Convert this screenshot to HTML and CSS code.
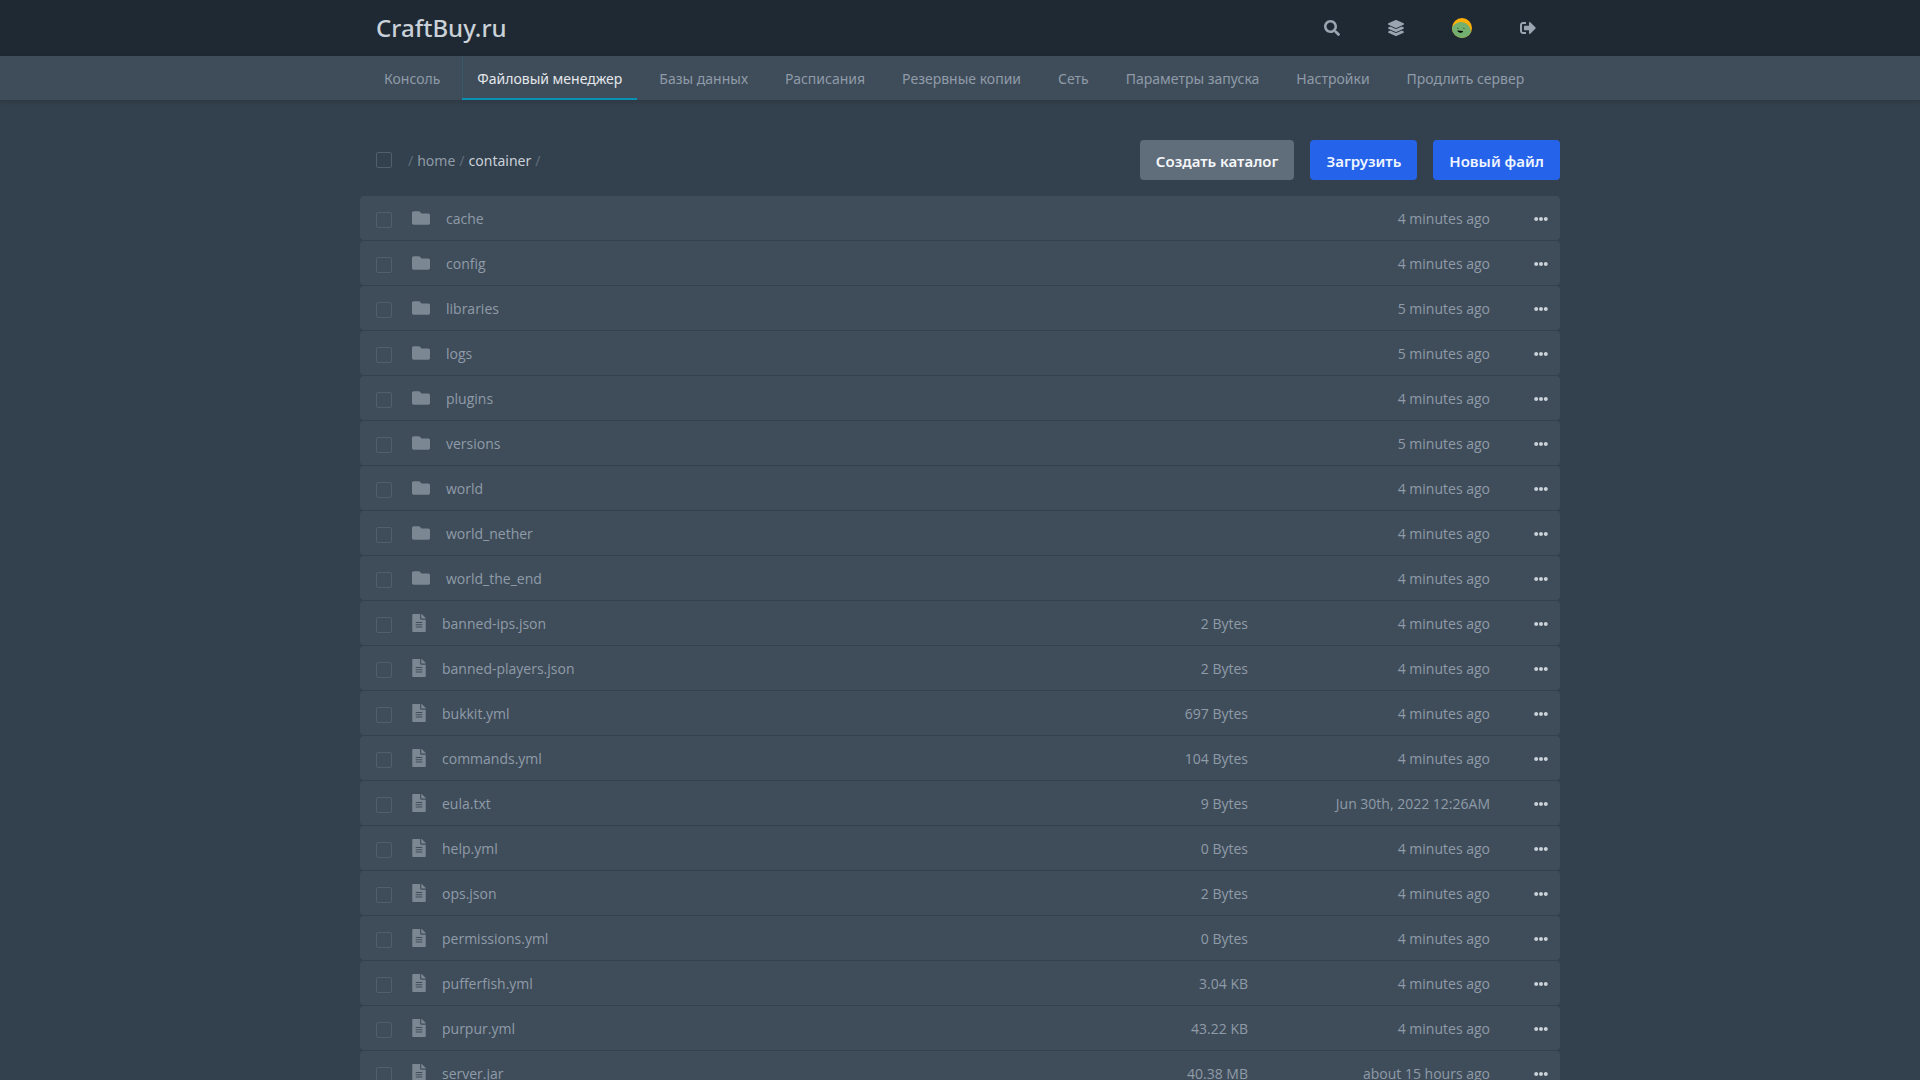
FILE: index.html
```html
<!DOCTYPE html>
<html lang="ru">
<head>
    <meta charset="UTF-8">
    <meta name="viewport" content="width=device-width, initial-scale=1.0">
    <title>CraftBuy.ru</title>
    <link rel="stylesheet" href="styles.css">
</head>
<body>
    <svg class="sprite" aria-hidden="true">
        <symbol id="search" viewBox="0 0 512 512"><path d="M505 442.7L405.3 343c-4.5-4.5-10.6-7-17-7H372c27.6-35.3 44-79.7 44-128C416 93.1 322.9 0 208 0S0 93.1 0 208s93.1 208 208 208c48.3 0 92.7-16.4 128-44v16.3c0 6.4 2.5 12.5 7 17l99.7 99.7c9.4 9.4 24.6 9.4 33.9 0l28.3-28.3c9.4-9.4 9.4-24.6.1-34zM208 336c-70.7 0-128-57.2-128-128 0-70.7 57.2-128 128-128 70.7 0 128 57.2 128 128 0 70.7-57.2 128-128 128z"/></symbol>
        <symbol id="layers" viewBox="0 0 512 512"><path d="M12.41 148.02l232.94 105.67c6.8 3.09 14.49 3.09 21.29 0l232.94-105.67c16.55-7.51 16.55-32.52 0-40.03L266.65 2.31a25.607 25.607 0 0 0-21.29 0L12.41 107.98c-16.55 7.51-16.55 32.53 0 40.04zm487.18 88.28l-58.09-26.33-161.64 73.27c-7.56 3.43-15.59 5.17-23.86 5.17s-16.29-1.74-23.86-5.17L70.51 209.97l-58.1 26.33c-16.55 7.5-16.55 32.5 0 40l232.94 105.59c6.8 3.08 14.49 3.08 21.29 0L499.59 276.3c16.55-7.5 16.55-32.5 0-40zm0 127.8l-57.87-26.23-161.86 73.37c-7.56 3.43-15.59 5.17-23.86 5.17s-16.29-1.74-23.86-5.17L70.29 337.87 12.41 364.1c-16.55 7.5-16.55 32.5 0 40l232.94 105.59c6.8 3.08 14.49 3.08 21.29 0L499.59 404.1c16.55-7.5 16.55-32.5 0-40z"/></symbol>
        <symbol id="sign-out" viewBox="0 0 512 512"><path d="M497 273L329 441c-15 15-41 4.5-41-17v-96H152c-13.3 0-24-10.7-24-24v-96c0-13.3 10.7-24 24-24h136V88c0-21.4 25.9-32 41-17l168 168c9.3 9.4 9.3 24.6 0 34zM192 436v-40c0-6.6-5.4-12-12-12H96c-17.7 0-32-14.3-32-32V160c0-17.7 14.3-32 32-32h84c6.6 0 12-5.4 12-12V76c0-6.6-5.4-12-12-12H96c-53 0-96 43-96 96v192c0 53 43 96 96 96h84c6.6 0 12-5.4 12-12z"/></symbol>
        <symbol id="folder" viewBox="0 0 512 512"><path d="M464 128H272l-64-64H48C21.49 64 0 85.49 0 112v288c0 26.51 21.49 48 48 48h416c26.51 0 48-21.49 48-48V176c0-26.51-21.49-48-48-48z"/></symbol>
        <symbol id="file" viewBox="0 0 384 512"><path d="M224 136V0H24C10.7 0 0 10.7 0 24v464c0 13.3 10.7 24 24 24h336c13.3 0 24-10.7 24-24V160H248c-13.2 0-24-10.8-24-24zm64 236c0 6.6-5.4 12-12 12H108c-6.6 0-12-5.4-12-12v-8c0-6.6 5.4-12 12-12h168c6.6 0 12 5.4 12 12v8zm0-64c0 6.6-5.4 12-12 12H108c-6.6 0-12-5.4-12-12v-8c0-6.6 5.4-12 12-12h168c6.6 0 12 5.4 12 12v8zm0-72v8c0 6.6-5.4 12-12 12H108c-6.6 0-12-5.4-12-12v-8c0-6.6 5.4-12 12-12h168c6.6 0 12 5.4 12 12zm96-114.1v6.1H256V0h6.1c6.4 0 12.5 2.5 17 7l97.9 98c4.5 4.5 7 10.6 7 16.9z"/></symbol>
        <symbol id="dots" viewBox="0 0 512 512"><path d="M328 256c0 39.8-32.2 72-72 72s-72-32.2-72-72 32.2-72 72-72 72 32.2 72 72zm104-72c-39.8 0-72 32.2-72 72s32.2 72 72 72 72-32.2 72-72-32.2-72-72-72zm-352 0c-39.8 0-72 32.2-72 72s32.2 72 72 72 72-32.2 72-72-32.2-72-72-72z"/></symbol>
    </svg>

    <header class="header">
        <div class="header-inner">
            <a class="logo" href="#">CraftBuy.ru</a>
            <div class="header-links">
                <button class="header-link" aria-label="Поиск"><svg class="icon"><use href="#search"/></svg></button>
                <a class="header-link" href="#" aria-label="Серверы"><svg class="icon"><use href="#layers"/></svg></a>
                <a class="header-link" href="#" aria-label="Аккаунт">
                    <svg class="avatar" viewBox="0 0 20 20">
                        <clipPath id="avatar-clip"><circle cx="10" cy="10" r="10"/></clipPath>
                        <g clip-path="url(#avatar-clip)">
                            <rect width="20" height="20" fill="#ffad08"/>
                            <circle cx="9" cy="14" r="10" fill="#73b06f"/>
                            <path d="M5 10.500q.8-.9 1.600 0M11 10.500q.8-.9 1.600 0" fill="none" stroke="#26402a" stroke-width=".7"/>
                            <path d="M5.200 12.500l6 .4q-.6 2-3 1.900-2.400-.2-3-2.300z" fill="#000"/>
                        </g>
                    </svg>
                </a>
                <button class="header-link" aria-label="Выйти"><svg class="icon"><use href="#sign-out"/></svg></button>
            </div>
        </div>
    </header>

    <nav class="subnav">
        <div class="subnav-inner">
            <a href="#">Консоль</a>
            <a href="#" class="active">Файловый менеджер</a>
            <a href="#">Базы данных</a>
            <a href="#">Расписания</a>
            <a href="#">Резервные копии</a>
            <a href="#">Сеть</a>
            <a href="#">Параметры запуска</a>
            <a href="#">Настройки</a>
            <a href="#">Продлить сервер</a>
        </div>
    </nav>

    <main class="content">
        <div class="toolbar">
            <input type="checkbox" class="checkbox" aria-label="Выбрать все">
            <div class="breadcrumbs">
                <span>/</span>
                <span class="crumb">home</span>
                <span>/</span>
                <a class="crumb current" href="#">container</a>
                <span>/</span>
            </div>
            <div class="actions">
                <button class="btn btn-secondary">Создать каталог</button>
                <button class="btn">Загрузить</button>
                <button class="btn">Новый файл</button>
            </div>
        </div>

        <table class="files">
            <tbody>
                <tr>
                    <td class="check"><input type="checkbox" class="checkbox" aria-label="cache"></td>
                    <td><a class="name" href="#"><svg class="folder-icon"><use href="#folder"/></svg>cache</a></td>
                    <td class="size"></td>
                    <td class="date">4 minutes ago</td>
                    <td class="menu"><button aria-label="Действия"><svg><use href="#dots"/></svg></button></td>
                </tr>
                <tr>
                    <td class="check"><input type="checkbox" class="checkbox" aria-label="config"></td>
                    <td><a class="name" href="#"><svg class="folder-icon"><use href="#folder"/></svg>config</a></td>
                    <td class="size"></td>
                    <td class="date">4 minutes ago</td>
                    <td class="menu"><button aria-label="Действия"><svg><use href="#dots"/></svg></button></td>
                </tr>
                <tr>
                    <td class="check"><input type="checkbox" class="checkbox" aria-label="libraries"></td>
                    <td><a class="name" href="#"><svg class="folder-icon"><use href="#folder"/></svg>libraries</a></td>
                    <td class="size"></td>
                    <td class="date">5 minutes ago</td>
                    <td class="menu"><button aria-label="Действия"><svg><use href="#dots"/></svg></button></td>
                </tr>
                <tr>
                    <td class="check"><input type="checkbox" class="checkbox" aria-label="logs"></td>
                    <td><a class="name" href="#"><svg class="folder-icon"><use href="#folder"/></svg>logs</a></td>
                    <td class="size"></td>
                    <td class="date">5 minutes ago</td>
                    <td class="menu"><button aria-label="Действия"><svg><use href="#dots"/></svg></button></td>
                </tr>
                <tr>
                    <td class="check"><input type="checkbox" class="checkbox" aria-label="plugins"></td>
                    <td><a class="name" href="#"><svg class="folder-icon"><use href="#folder"/></svg>plugins</a></td>
                    <td class="size"></td>
                    <td class="date">4 minutes ago</td>
                    <td class="menu"><button aria-label="Действия"><svg><use href="#dots"/></svg></button></td>
                </tr>
                <tr>
                    <td class="check"><input type="checkbox" class="checkbox" aria-label="versions"></td>
                    <td><a class="name" href="#"><svg class="folder-icon"><use href="#folder"/></svg>versions</a></td>
                    <td class="size"></td>
                    <td class="date">5 minutes ago</td>
                    <td class="menu"><button aria-label="Действия"><svg><use href="#dots"/></svg></button></td>
                </tr>
                <tr>
                    <td class="check"><input type="checkbox" class="checkbox" aria-label="world"></td>
                    <td><a class="name" href="#"><svg class="folder-icon"><use href="#folder"/></svg>world</a></td>
                    <td class="size"></td>
                    <td class="date">4 minutes ago</td>
                    <td class="menu"><button aria-label="Действия"><svg><use href="#dots"/></svg></button></td>
                </tr>
                <tr>
                    <td class="check"><input type="checkbox" class="checkbox" aria-label="world_nether"></td>
                    <td><a class="name" href="#"><svg class="folder-icon"><use href="#folder"/></svg>world_nether</a></td>
                    <td class="size"></td>
                    <td class="date">4 minutes ago</td>
                    <td class="menu"><button aria-label="Действия"><svg><use href="#dots"/></svg></button></td>
                </tr>
                <tr>
                    <td class="check"><input type="checkbox" class="checkbox" aria-label="world_the_end"></td>
                    <td><a class="name" href="#"><svg class="folder-icon"><use href="#folder"/></svg>world_the_end</a></td>
                    <td class="size"></td>
                    <td class="date">4 minutes ago</td>
                    <td class="menu"><button aria-label="Действия"><svg><use href="#dots"/></svg></button></td>
                </tr>
                <tr>
                    <td class="check"><input type="checkbox" class="checkbox" aria-label="banned-ips.json"></td>
                    <td><a class="name" href="#"><svg class="file-icon"><use href="#file"/></svg>banned-ips.json</a></td>
                    <td class="size">2 Bytes</td>
                    <td class="date">4 minutes ago</td>
                    <td class="menu"><button aria-label="Действия"><svg><use href="#dots"/></svg></button></td>
                </tr>
                <tr>
                    <td class="check"><input type="checkbox" class="checkbox" aria-label="banned-players.json"></td>
                    <td><a class="name" href="#"><svg class="file-icon"><use href="#file"/></svg>banned-players.json</a></td>
                    <td class="size">2 Bytes</td>
                    <td class="date">4 minutes ago</td>
                    <td class="menu"><button aria-label="Действия"><svg><use href="#dots"/></svg></button></td>
                </tr>
                <tr>
                    <td class="check"><input type="checkbox" class="checkbox" aria-label="bukkit.yml"></td>
                    <td><a class="name" href="#"><svg class="file-icon"><use href="#file"/></svg>bukkit.yml</a></td>
                    <td class="size">697 Bytes</td>
                    <td class="date">4 minutes ago</td>
                    <td class="menu"><button aria-label="Действия"><svg><use href="#dots"/></svg></button></td>
                </tr>
                <tr>
                    <td class="check"><input type="checkbox" class="checkbox" aria-label="commands.yml"></td>
                    <td><a class="name" href="#"><svg class="file-icon"><use href="#file"/></svg>commands.yml</a></td>
                    <td class="size">104 Bytes</td>
                    <td class="date">4 minutes ago</td>
                    <td class="menu"><button aria-label="Действия"><svg><use href="#dots"/></svg></button></td>
                </tr>
                <tr>
                    <td class="check"><input type="checkbox" class="checkbox" aria-label="eula.txt"></td>
                    <td><a class="name" href="#"><svg class="file-icon"><use href="#file"/></svg>eula.txt</a></td>
                    <td class="size">9 Bytes</td>
                    <td class="date">Jun 30th, 2022 12:26AM</td>
                    <td class="menu"><button aria-label="Действия"><svg><use href="#dots"/></svg></button></td>
                </tr>
                <tr>
                    <td class="check"><input type="checkbox" class="checkbox" aria-label="help.yml"></td>
                    <td><a class="name" href="#"><svg class="file-icon"><use href="#file"/></svg>help.yml</a></td>
                    <td class="size">0 Bytes</td>
                    <td class="date">4 minutes ago</td>
                    <td class="menu"><button aria-label="Действия"><svg><use href="#dots"/></svg></button></td>
                </tr>
                <tr>
                    <td class="check"><input type="checkbox" class="checkbox" aria-label="ops.json"></td>
                    <td><a class="name" href="#"><svg class="file-icon"><use href="#file"/></svg>ops.json</a></td>
                    <td class="size">2 Bytes</td>
                    <td class="date">4 minutes ago</td>
                    <td class="menu"><button aria-label="Действия"><svg><use href="#dots"/></svg></button></td>
                </tr>
                <tr>
                    <td class="check"><input type="checkbox" class="checkbox" aria-label="permissions.yml"></td>
                    <td><a class="name" href="#"><svg class="file-icon"><use href="#file"/></svg>permissions.yml</a></td>
                    <td class="size">0 Bytes</td>
                    <td class="date">4 minutes ago</td>
                    <td class="menu"><button aria-label="Действия"><svg><use href="#dots"/></svg></button></td>
                </tr>
                <tr>
                    <td class="check"><input type="checkbox" class="checkbox" aria-label="pufferfish.yml"></td>
                    <td><a class="name" href="#"><svg class="file-icon"><use href="#file"/></svg>pufferfish.yml</a></td>
                    <td class="size">3.04 KB</td>
                    <td class="date">4 minutes ago</td>
                    <td class="menu"><button aria-label="Действия"><svg><use href="#dots"/></svg></button></td>
                </tr>
                <tr>
                    <td class="check"><input type="checkbox" class="checkbox" aria-label="purpur.yml"></td>
                    <td><a class="name" href="#"><svg class="file-icon"><use href="#file"/></svg>purpur.yml</a></td>
                    <td class="size">43.22 KB</td>
                    <td class="date">4 minutes ago</td>
                    <td class="menu"><button aria-label="Действия"><svg><use href="#dots"/></svg></button></td>
                </tr>
                <tr>
                    <td class="check"><input type="checkbox" class="checkbox" aria-label="server.jar"></td>
                    <td><a class="name" href="#"><svg class="file-icon"><use href="#file"/></svg>server.jar</a></td>
                    <td class="size">40.38 MB</td>
                    <td class="date">about 15 hours ago</td>
                    <td class="menu"><button aria-label="Действия"><svg><use href="#dots"/></svg></button></td>
                </tr>
            </tbody>
        </table>
    </main>
</body>
</html>
```

FILE: styles.css
```css
* {
    box-sizing: border-box;
}

html {
    scrollbar-width: none;
}

body {
    margin: 0;
    background-color: #33404d;
    color: #cad1d8;
    font-family: "Noto Sans", sans-serif;
    font-size: 14px;
    line-height: 20px;
}

a {
    color: inherit;
    text-decoration: none;
}

button {
    border: none;
    background: none;
    color: inherit;
    font-family: inherit;
    cursor: pointer;
}

svg {
    display: block;
    fill: currentColor;
}

.sprite {
    display: none;
}

/* Header */
.header {
    background-color: #1f2933;
}

.header-inner {
    display: flex;
    align-items: center;
    justify-content: space-between;
    max-width: 1200px;
    height: 56px;
    margin: 0 auto;
    padding-left: 16px;
}

.logo {
    font-size: 24px;
    font-weight: 500;
    line-height: 32px;
}

.header-links {
    display: flex;
    height: 100%;
}

.header-link {
    display: flex;
    align-items: center;
    padding: 0 24px;
    color: #9aa5b1;
}

.icon {
    width: 16px;
    height: 16px;
}

.avatar {
    width: 20px;
    height: 20px;
}

/* Server navigation */
.subnav {
    background-color: #3f4d5a;
    box-shadow: 0 2px 4px rgba(0, 0, 0, 0.12);
}

.subnav-inner {
    display: flex;
    gap: 7px;
    max-width: 1200px;
    margin: 0 auto;
    padding: 0 9px;
}

.subnav a {
    padding: 13px 15px 11px;
    color: #8f9ba8;
    white-space: nowrap;
}

.subnav a.active {
    color: #e4e7eb;
    box-shadow: inset 0 -2px #0891b2, inset 1px 0 rgba(8, 145, 178, 0.2);
}

/* File manager */
.content {
    max-width: 1200px;
    margin: 40px auto;
}

.toolbar {
    display: flex;
    align-items: center;
    margin-bottom: 15px;
    padding-left: 16px;
}

.checkbox {
    display: block;
    appearance: none;
    width: 16px;
    height: 16px;
    margin: 0;
    border: 1px solid #515f6c;
    border-radius: 2px;
}

.checkbox:checked {
    background-color: #2563eb;
}

.breadcrumbs {
    display: flex;
    gap: 4px;
    margin-left: 16px;
    padding-top: 2px;
    color: #606d7b;
}

.crumb {
    color: #8f9ba8;
}

.crumb.current {
    color: #cad1d8;
}

.actions {
    display: flex;
    gap: 16px;
    margin-left: auto;
}

.btn {
    height: 40px;
    padding: 2px 16px 0;
    border-radius: 4px;
    background-color: #2563eb;
    color: #eff6ff;
    font-size: 15px;
    font-weight: 600;
}

.btn-secondary {
    background-color: #606d7b;
    color: #f5f7fa;
}

.files {
    width: 100%;
    border-collapse: separate;
    border-spacing: 0 1px;
    color: #8f9ba8;
    font-family: "Open Sans", "Noto Sans", sans-serif;
}

.files td {
    height: 44px;
    padding: 2px 0 0;
    background-color: #3f4d5a;
}

.files td:first-child {
    border-radius: 4px 0 0 4px;
}

.files td:last-child {
    border-radius: 0 4px 4px 0;
}

.files .check {
    width: 48px;
    padding: 4px 0 0 16px;
}

.name {
    display: flex;
    align-items: center;
    padding-left: 4px;
}

.name svg {
    height: 18px;
    margin: 0 16px 2px 0;
    color: #7b8793;
}

.folder-icon {
    width: 18px;
}

.file-icon {
    width: 14px;
}

.files .size,
.files .date {
    text-align: right;
}

.files .size {
    width: 200px;
}

.files .date {
    width: 242px;
}

.files .menu {
    width: 70px;
}

.menu button {
    display: block;
    margin-left: auto;
    padding: 12px;
    color: #cad1d8;
}

.menu svg {
    width: 14px;
    height: 14px;
}
```
